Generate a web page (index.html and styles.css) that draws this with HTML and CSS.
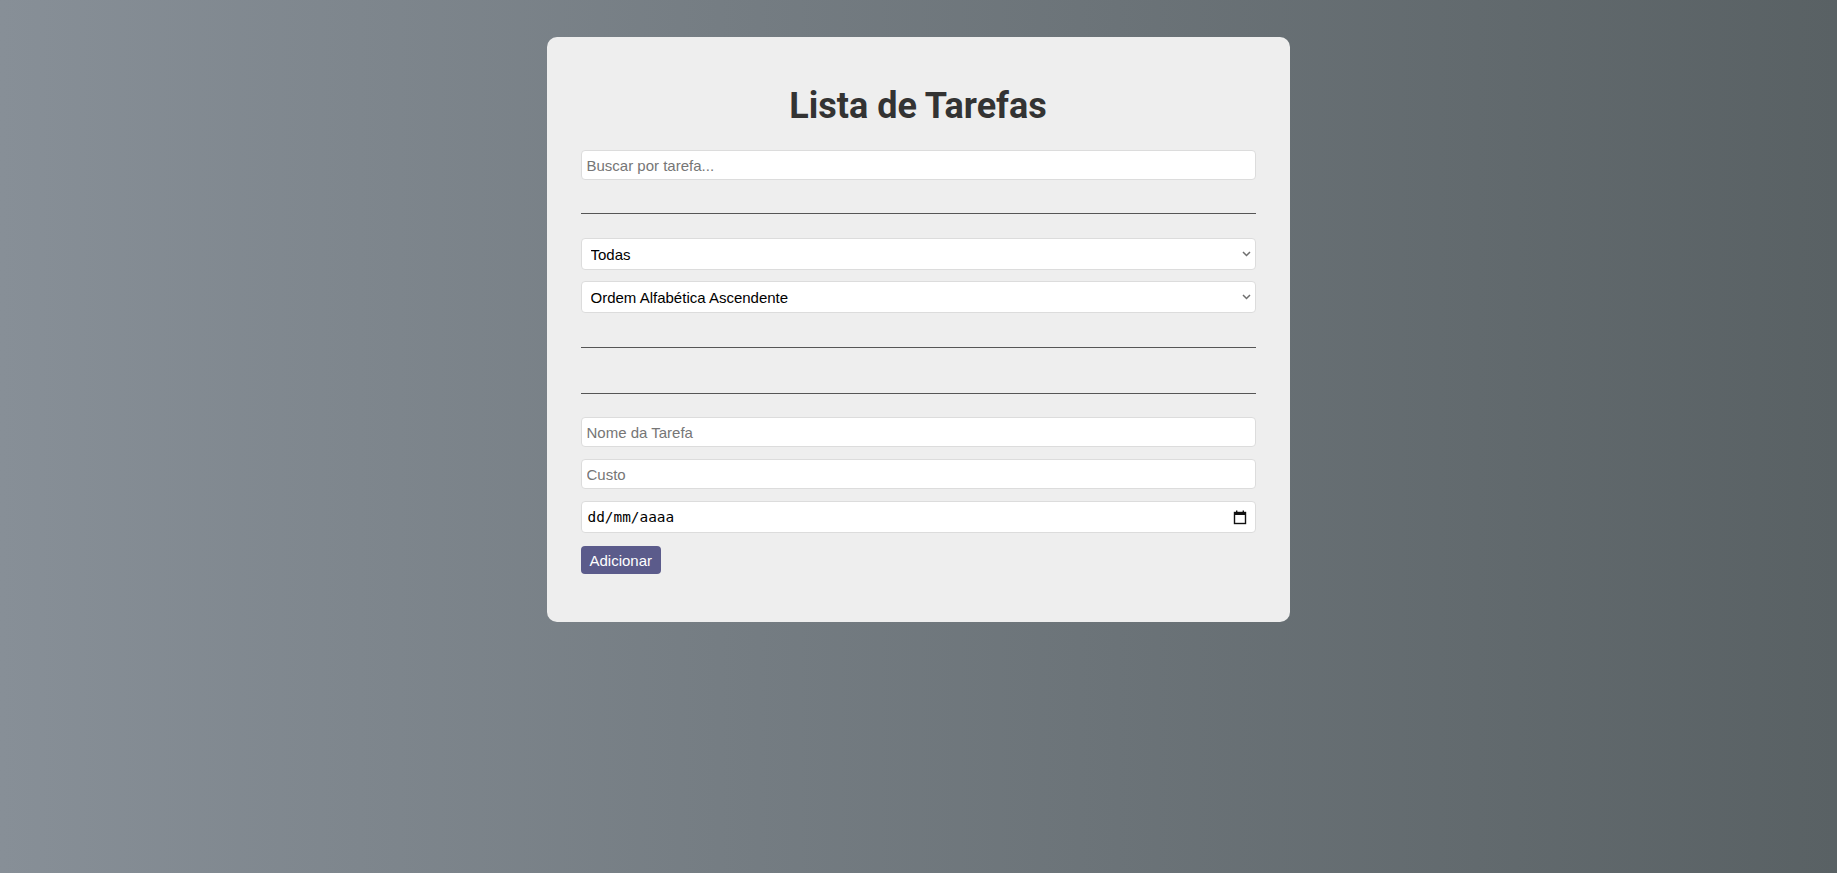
FILE: index.html
```html
<!DOCTYPE html>
<html lang="pt-BR">
<head>
<meta charset="utf-8">
<title>Lista de Tarefas</title>
<link rel="stylesheet" href="styles.css">
</head>
<body>
<main class="card">
  <h1 class="title">Lista de Tarefas</h1>
  <input class="field" type="text" placeholder="Buscar por tarefa...">
  <hr class="rule rule-first">
  <div class="select-wrap">
    <select class="field select">
      <option>Todas</option>
    </select>
    <svg class="chevron" width="9" height="6" viewBox="0 0 9 6" aria-hidden="true"><path d="M1 1l3.5 3.5L8 1" fill="none" stroke="#6f6f6f" stroke-width="1.5"/></svg>
  </div>
  <div class="select-wrap select-wrap-second">
    <select class="field select">
      <option>Ordem Alfabética Ascendente</option>
    </select>
    <svg class="chevron" width="9" height="6" viewBox="0 0 9 6" aria-hidden="true"><path d="M1 1l3.5 3.5L8 1" fill="none" stroke="#6f6f6f" stroke-width="1.5"/></svg>
  </div>
  <hr class="rule rule-second">
  <ul class="task-list"></ul>
  <hr class="rule rule-third">
  <input class="field" type="text" placeholder="Nome da Tarefa">
  <input class="field" type="text" placeholder="Custo">
  <div class="field date-field">
    <span class="date-text">dd/mm/aaaa</span>
    <svg class="cal-icon" width="14" height="15" viewBox="0 0 14 15" aria-hidden="true">
      <rect x="1.5" y="2.5" width="11" height="11" fill="none" stroke="#111" stroke-width="1.4"/>
      <rect x="1" y="2" width="12" height="3" fill="#111"/>
      <rect x="3" y="0.5" width="1.4" height="2" fill="#111"/>
      <rect x="9.6" y="0.5" width="1.4" height="2" fill="#111"/>
    </svg>
  </div>
  <button class="btn" type="button">Adicionar</button>
</main>
</body>
</html>
```

FILE: styles.css
```css
* { box-sizing: border-box; }

html, body { height: 100%; }

body {
  margin: 0;
  padding-top: 37px;
  padding-right: 1px;
  font-family: "Liberation Sans", Arial, sans-serif;
  background: linear-gradient(to right, #878f97, #596164);
  min-height: 873px;
}

.card {
  width: 743px;
  margin: 0 auto;
  background: #eeeeee;
  border-radius: 10px;
  padding: 34px 34px 48px;
  display: flex;
  flex-direction: column;
  align-items: stretch;
}

.title {
  font-family: Roboto, "Liberation Sans", sans-serif;
  font-weight: 700;
  font-size: 36px;
  line-height: 42px;
  color: #333333;
  text-align: center;
  margin: 14px 0 23px;
}

.field {
  display: block;
  width: 100%;
  height: 30px;
  margin: 0;
  padding: 0 5px;
  border: 1px solid #dcdcdc;
  border-radius: 4px;
  background: #ffffff;
  font-family: "Liberation Sans", Arial, sans-serif;
  font-size: 15px;
  color: #000000;
  outline: none;
}

.field::placeholder { color: #767676; opacity: 1; }

.field + .field { margin-top: 12px; }

.select-wrap {
  position: relative;
}

.select-wrap-second { margin-top: 11px; }

.select {
  height: 32px;
  padding-left: 9px;
  -webkit-appearance: none;
  appearance: none;
}

.chevron {
  position: absolute;
  right: 5px;
  top: 13px;
  pointer-events: none;
}

.rule {
  border: 0;
  border-top: 1px solid #555555;
  height: 0;
  margin: 0;
  width: 100%;
}

.rule-first { margin: 33px 0 24px; }
.rule-second { margin: 34px 0 0; }
.task-list { list-style: none; margin: 0; padding: 0; height: 45px; }
.rule-third { margin: 0 0 23px; }

.date-field {
  height: 32px;
  display: flex;
  align-items: center;
  justify-content: space-between;
  padding: 0 8px 0 6px;
}

.date-text {
  font-family: "DejaVu Sans Mono", "Liberation Mono", monospace;
  font-size: 14.4px;
  color: #000000;
}

.cal-icon { display: block; }

.btn {
  align-self: flex-start;
  margin-top: 13px;
  height: 28px;
  padding: 0 9px;
  border: 0;
  border-radius: 4px;
  background: #5b5b8b;
  color: #ffffff;
  font-family: "Liberation Sans", Arial, sans-serif;
  font-size: 15px;
  cursor: pointer;
}
```
